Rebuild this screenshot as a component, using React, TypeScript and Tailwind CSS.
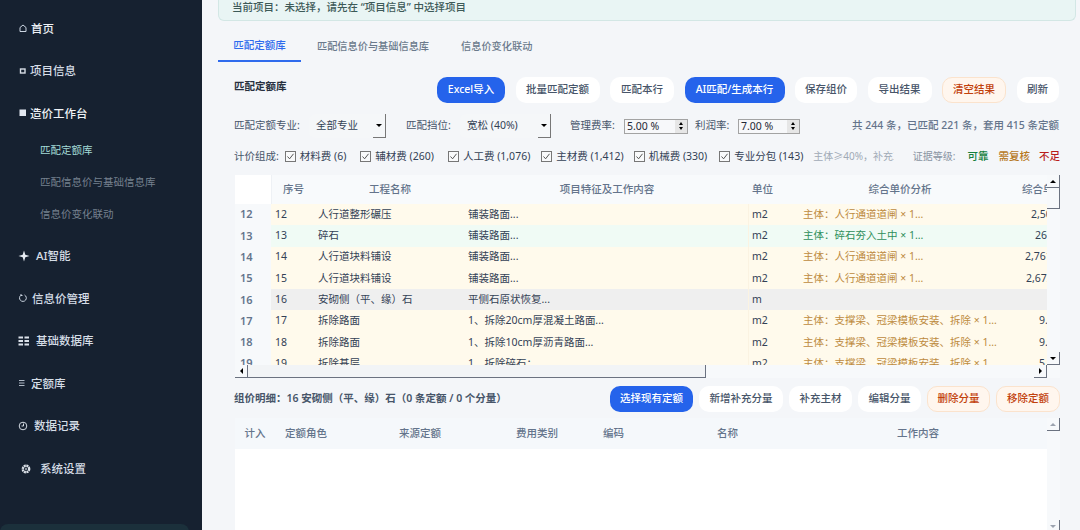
import React from 'react'

const font = { fontFamily: '"Noto Sans", "Noto Sans CJK SC", sans-serif' }

const Icon = ({ kind }: { kind: string }) => {
  if (kind === 'home')
    return (
      <svg width="10" height="10" viewBox="0 0 10 10" fill="none" stroke="#cbd5e1" strokeWidth="1">
        <path d="M2 4.5 5 2l3 2.5V8.5H2z" />
      </svg>
    )
  if (kind === 'box')
    return (
      <svg width="10" height="10" viewBox="0 0 10 10" fill="none" stroke="#d8dee6" strokeWidth="1.4">
        <rect x="2.5" y="3" width="4.5" height="4" />
      </svg>
    )
  if (kind === 'solid')
    return (
      <svg width="10" height="10" viewBox="0 0 10 10" fill="#e2e8f0">
        <rect x="1.5" y="1.5" width="6.5" height="6.5" />
      </svg>
    )
  if (kind === 'spark')
    return (
      <svg width="12" height="12" viewBox="0 0 12 12" fill="#e8edf3">
        <path d="M6 0.5 7.3 4.7 11.5 6 7.3 7.3 6 11.5 4.7 7.3 0.5 6 4.7 4.7z" />
      </svg>
    )
  if (kind === 'refresh')
    return (
      <svg width="10" height="10" viewBox="0 0 10 10" fill="none" stroke="#cbd5e1" strokeWidth="1">
        <path d="M3 2.2A3.4 3.4 0 1 0 6.5 2M3 1v1.5h1.5" />
      </svg>
    )
  if (kind === 'grid')
    return (
      <svg width="12" height="10" viewBox="0 0 12 10" fill="#dbe2ea">
        <rect x="0.5" y="0.5" width="4.5" height="2" />
        <rect x="6.5" y="0.5" width="4.5" height="2" />
        <rect x="0.5" y="4" width="4.5" height="2" />
        <rect x="6.5" y="4" width="4.5" height="2" />
        <rect x="0.5" y="7.5" width="4.5" height="2" />
        <rect x="6.5" y="7.5" width="4.5" height="2" />
      </svg>
    )
  if (kind === 'lines')
    return (
      <svg width="8" height="8" viewBox="0 0 8 8" stroke="#aeb8c4" strokeWidth="1">
        <path d="M1 1.5h5.5M1 4h5.5M1 6.5h5.5" />
      </svg>
    )
  if (kind === 'clock')
    return (
      <svg width="10" height="10" viewBox="0 0 10 10" fill="none" stroke="#d3dae2" strokeWidth="1">
        <circle cx="5" cy="5" r="3.8" />
        <path d="M5.5 2.5V5H3.5" />
      </svg>
    )
  return (
    <svg width="12" height="12" viewBox="0 0 12 12" fill="none" stroke="#dde3ea" strokeWidth="2.4">
      <circle cx="6" cy="6" r="3.2" strokeDasharray="2 0.5" />
      <circle cx="6" cy="6" r="0.5" strokeWidth="1" />
    </svg>
  )
}

const NavItem = ({ icon, label, gap, active }: { icon: string; label: string; gap: string; active?: boolean }) => (
  <div className={`flex h-[42.6px] items-center pl-[18px] text-[11.5px] font-medium ${gap} ${active ? 'text-[#eef2f6]' : 'text-[#d5dde6]'}`}>
    <Icon kind={icon} />
    <span>{label}</span>
  </div>
)

const Sidebar = () => (
  <aside className="relative flex h-full w-[202px] shrink-0 flex-col bg-[#162130] pt-[7px]">
    <NavItem icon="home" label="首页" gap="gap-[3px]" active />
    <NavItem icon="box" label="项目信息" gap="gap-[2px]" />
    <NavItem icon="solid" label="造价工作台" gap="gap-[2px]" active />
    <div className="flex flex-col pb-[3.5px] pl-[40px] text-[10.5px] text-[#75808e]">
      <div className="flex h-[32px] items-center text-[#a5dcd8]">匹配定额库</div>
      <div className="flex h-[32px] items-center">匹配信息价与基础信息库</div>
      <div className="flex h-[32px] items-center">信息价变化联动</div>
    </div>
    <NavItem icon="spark" label="AI智能" gap="gap-[6px]" />
    <NavItem icon="refresh" label="信息价管理" gap="gap-[4px]" />
    <NavItem icon="grid" label="基础数据库" gap="gap-[6px]" />
    <NavItem icon="lines" label="定额库" gap="gap-[5px]" />
    <NavItem icon="clock" label="数据记录" gap="gap-[6px]" />
    <div className="pl-[2px]">
      <NavItem icon="gear" label="系统设置" gap="gap-[8px]" />
    </div>
    <div className="absolute bottom-[-6px] left-0 h-[12px] w-[189px] rounded-t-lg bg-[#1b303b]" />
  </aside>
)

const Btn = ({ children, tone = 'plain', w }: { children: React.ReactNode; tone?: string; w: string }) => {
  const toneClass =
    tone === 'blue'
      ? 'bg-[#2563eb] text-white'
      : tone === 'danger'
        ? 'border border-[#fbe3cd] bg-[#fff6ee] text-[#c2410c]'
        : 'bg-white text-[#475569]'
  return (
    <button className={`flex h-[26px] items-center justify-center rounded-[10px] text-[10.5px] font-medium ${w} ${toneClass}`}>
      {children}
    </button>
  )
}

const Select = ({ label, w }: { label: string; w: string }) => (
  <div className={`flex h-[24px] items-center justify-between rounded-l-md bg-[#f5f7f9] pl-[7px] text-[10.5px] text-[#334155] ${w}`}>
    <span>{label}</span>
    <span className="flex h-[24px] w-[13px] items-center justify-center border-b border-r border-[#777]">
      <span className="h-0 w-0 border-x-[3px] border-t-[3px] border-x-transparent border-t-black" />
    </span>
  </div>
)

const Spin = ({ value, w }: { value: string; w: string }) => (
  <div className={`flex h-[15px] items-center justify-between border border-[#a3a3a3] bg-[#f7f8fa] pl-[2px] text-[10.5px] leading-none text-[#1f2937] ${w}`}>
    <span>{value}</span>
    <span className="flex h-full w-[12px] flex-col items-center justify-center gap-[2px] bg-[#e6e6e6]">
      <span className="h-0 w-0 border-x-[2.5px] border-b-[3px] border-x-transparent border-b-black" />
      <span className="h-0 w-0 border-x-[2.5px] border-t-[3px] border-x-transparent border-t-black" />
    </span>
  </div>
)

const Check = ({ label, className = '' }: { label: string; className?: string }) => (
  <label className={`flex items-center gap-[4px] text-[10.5px] text-[#334155] ${className}`}>
    <span className="flex h-[11px] w-[11px] items-center justify-center border border-[#777] bg-[#f9fafb]">
      <svg width="9" height="9" viewBox="0 0 9 9" fill="none" stroke="#444" strokeWidth="0.9">
        <path d="M1.5 4.5 3.6 6.8 7.5 1.8" />
      </svg>
    </span>
    {label}
  </label>
)

// 1px bevel corners of the old style scrollbars
const Arrow = ({ dir, light }: { dir: 'up' | 'down' | 'left' | 'right'; light?: boolean }) => {
  const c = light ? '#9ca3af' : '#000'
  const tri = {
    up: { borderLeft: '3px solid transparent', borderRight: '3px solid transparent', borderBottom: `3px solid ${c}` },
    down: { borderLeft: '3px solid transparent', borderRight: '3px solid transparent', borderTop: `3px solid ${c}` },
    left: { borderTop: '3px solid transparent', borderBottom: '3px solid transparent', borderRight: `3px solid ${c}` },
    right: { borderTop: '3px solid transparent', borderBottom: '3px solid transparent', borderLeft: `3px solid ${c}` },
  }[dir]
  return (
    <span className="flex h-[13px] w-[13px] shrink-0 items-center justify-center border-b border-r border-[#6b7280]">
      <span className="h-0 w-0" style={tri} />
    </span>
  )
}

type Row = { no: string; name: string; feat: string; unit: string; calc: string; total: string; pad: string; tone: 'y' | 'g' | 'n' }

const rows: Row[] = [
  { no: '12', name: '人行道整形碾压', feat: '铺装路面...', unit: 'm2', calc: '主体：人行通道道闸 × 1...', total: '2,506.58', pad: 'pl-[31px]', tone: 'y' },
  { no: '13', name: '碎石', feat: '铺装路面...', unit: 'm2', calc: '主体：碎石夯入土中 × 1...', total: '267.30', pad: 'pl-[35px]', tone: 'g' },
  { no: '14', name: '人行道块料铺设', feat: '铺装路面...', unit: 'm2', calc: '主体：人行通道道闸 × 1...', total: '2,761.40', pad: 'pl-[25px]', tone: 'y' },
  { no: '15', name: '人行道块料铺设', feat: '铺装路面...', unit: 'm2', calc: '主体：人行通道道闸 × 1...', total: '2,672.15', pad: 'pl-[26px]', tone: 'y' },
  { no: '16', name: '安砌侧（平、缘）石', feat: '平侧石原状恢复...', unit: 'm', calc: '', total: '', pad: '', tone: 'n' },
  { no: '17', name: '拆除路面', feat: '1、拆除20cm厚混凝土路面...', unit: 'm2', calc: '主体：支撑梁、冠梁模板安装、拆除 × 1...', total: '9.84', pad: 'pl-[39px]', tone: 'y' },
  { no: '18', name: '拆除路面', feat: '1、拆除10cm厚沥青路面...', unit: 'm2', calc: '主体：支撑梁、冠梁模板安装、拆除 × 1...', total: '9.84', pad: 'pl-[39px]', tone: 'y' },
  { no: '19', name: '拆除基层', feat: '1、拆除碎石；', unit: 'm2', calc: '主体：支撑梁、冠梁模板安装、拆除 × 1', total: '5.26', pad: 'pl-[39px]', tone: 'y' },
]

const cols = 'grid grid-cols-[36px_44px_150px_284px_51px_200px_47px]'

const MatchTable = () => (
  <div className="relative mt-[11px] h-[203px] w-[825px] bg-[#f7f9fb]">
    <div className="flex h-[190px]">
      <div className="w-[812px] overflow-hidden">
        <div className={`${cols} h-[29px] items-center bg-[#f8fafc] text-[10.5px] font-medium text-[#64748b]`}>
          <div className="h-full bg-white" />
          <div className="flex h-full items-center justify-center border-l border-[#eef1f5]">序号</div>
          <div className="text-center">工程名称</div>
          <div className="text-center">项目特征及工作内容</div>
          <div className="pl-[3px]">单位</div>
          <div className="text-center">综合单价分析</div>
          <div className="overflow-hidden whitespace-nowrap pl-[22px]">综合单价</div>
        </div>
        {rows.map((r) => {
          const bg = r.tone === 'y' ? 'bg-[#fffaec]' : r.tone === 'g' ? 'bg-[#f0fbf5]' : 'bg-[#efefef]'
          const calcColor = r.tone === 'g' ? 'text-[#2f8f5b]' : 'text-[#bd8a3e]'
          return (
            <div key={r.no} className={`${cols} h-[21.3px] items-center text-[10.5px] text-[#334155]`}>
              <div className="flex h-full items-center bg-[#f7f9fb] pl-[5px] text-[11px] font-semibold text-[#64748b]">{r.no}</div>
              <div className={`flex h-full items-center pl-[4px] ${bg}`}>{r.no}</div>
              <div className={`flex h-full items-center pl-[3px] ${bg}`}>{r.name}</div>
              <div className={`flex h-full items-center whitespace-nowrap border-r border-[#fbf3e2] pl-[3px] ${bg}`}>{r.feat}</div>
              <div className={`flex h-full items-center pl-[3px] ${bg}`}>{r.unit}</div>
              <div className={`flex h-full items-center whitespace-nowrap pl-[3px] ${calcColor} ${bg}`}>{r.calc}</div>
              <div className={`flex h-full items-center overflow-hidden whitespace-nowrap ${r.pad} ${bg}`}>{r.total}</div>
            </div>
          )
        })}
      </div>
      <div className="flex w-[13px] flex-col">
        <Arrow dir="up" />
        <span className="h-[21px] border-b border-r border-[#6b7280]" />
        <div className="flex-1" />
        <Arrow dir="down" />
      </div>
    </div>
    <div className="flex h-[13px] w-[812px] items-center bg-[#f7f9fb]">
      <Arrow dir="left" />
      <span className="h-[13px] w-[458px] border-b border-r border-[#6b7280] bg-[#f2f4f6]" />
      <div className="flex-1" />
      <Arrow dir="right" />
    </div>
  </div>
)

const DetailTable = () => (
  <div className="relative mt-[6px] flex h-[120px] w-[825px] overflow-hidden">
    <div className="w-[812px]">
      <div className="grid h-[31px] grid-cols-[40px_106px_111px_94px_64px_180px_217px] items-center bg-[#f5f8fb] text-[10.5px] font-medium text-[#64748b]">
        <div className="text-center">计入</div>
        <div className="pl-[10px]">定额角色</div>
        <div className="pl-[18px]">来源定额</div>
        <div className="pl-[24px]">费用类别</div>
        <div className="pl-[17px]">编码</div>
        <div className="pl-[67px]">名称</div>
        <div className="pl-[67px]">工作内容</div>
      </div>
      <div className="h-[89px] bg-white" />
    </div>
    <div className="flex w-[13px] flex-col justify-between bg-[#f7f9fb] pb-[5px]">
      <Arrow dir="up" light />
      <Arrow dir="down" light />
    </div>
  </div>
)

export default function App() {
  return (
    <div className="flex h-[530px] w-[1080px] overflow-hidden bg-[#f4f6f9]" style={font}>
      <Sidebar />
      <main className="flex min-w-0 flex-1 flex-col overflow-hidden">
        <div className="ml-[16px] mr-[4px] flex h-[21px] shrink-0 items-center whitespace-pre rounded-b-md border border-t-0 border-[#d3e7e5] bg-[#e9f5f4] pb-[4px] pl-[13px] text-[10.5px] font-medium text-[#3d5a58]">
          当前项目：未选择，请先在 “项目信息” 中选择项目
        </div>
        <div className="ml-[16px] mt-[15px] flex h-[26px] shrink-0 items-start text-[10.2px] font-medium text-[#6b7a8c]">
          <div className="flex h-[26px] w-[83px] justify-center border-b-2 border-[#2f6bed] pt-[2px] text-[10.5px] text-[#2f6bed]">匹配定额库</div>
          <div className="ml-[16px] pt-[3px]">匹配信息价与基础信息库</div>
          <div className="ml-[32px] pt-[3px]">信息价变化联动</div>
        </div>
        <div className="shrink-0 pl-[33px]">
          <div className="mt-[15px] flex items-center">
            <div className="-ml-[1px] w-[203px] pb-[6px] text-[10.5px] font-semibold text-[#27303f]">匹配定额库</div>
            <div className="flex gap-[10.5px]">
              <Btn tone="blue" w="w-[68px]">Excel导入</Btn>
              <Btn w="w-[84px]">批量匹配定额</Btn>
              <Btn w="w-[64px]">匹配本行</Btn>
              <Btn tone="blue" w="w-[100px]">AI匹配/生成本行</Btn>
              <Btn w="w-[62px]">保存组价</Btn>
              <Btn w="w-[64px]">导出结果</Btn>
              <Btn tone="danger" w="w-[64px]">清空结果</Btn>
              <Btn w="w-[42px]">刷新</Btn>
            </div>
          </div>
          <div className="-ml-[1px] mt-[11px] flex h-[24px] w-[826px] items-center text-[10.5px] text-[#475569]">
            <span className="w-[75px]">匹配定额专业:</span>
            <Select label="全部专业" w="w-[77px]" />
            <span className="ml-[20px] w-[54px]">匹配挡位:</span>
            <Select label="宽松 (40%)" w="w-[91px]" />
            <span className="ml-[19px] w-[54px]">管理费率:</span>
            <Spin value="5.00 %" w="w-[64px]" />
            <span className="ml-[7px] w-[43px]">利润率:</span>
            <Spin value="7.00 %" w="w-[62px]" />
            <span className="ml-auto mr-[1px] font-medium text-[#64748b]">共 244 条，已匹配 221 条，套用 415 条定额</span>
          </div>
          <div className="-ml-[1px] mt-[11px] flex h-[15px] w-[826px] items-center whitespace-nowrap text-[10.5px] text-[#475569]">
            <span className="w-[53px]">计价组成:</span>
            <div className="flex gap-[14px]">
              <Check label="材料费 (6)" />
              <Check label="辅材费 (260)" />
              <Check label="人工费 (1,076)" />
              <Check label="主材费 (1,412)" className="-ml-[3px]" />
              <Check label="机械费 (330)" className="-ml-[4px]" />
              <Check label="专业分包 (143)" className="-ml-[2px]" />
            </div>
            <span className="ml-[10px] w-[84px] overflow-hidden text-[10px] text-[#a0aab6]">主体≥40%，补充工</span>
            <span className="ml-[19px] text-[10px] text-[#8a95a3]">证据等级:</span>
            <span className="ml-[12px] font-medium text-[#15803d]">可靠</span>
            <span className="ml-[10px] font-medium text-[#b7791f]">需复核</span>
            <span className="ml-[9px] font-medium text-[#b91c1c]">不足</span>
          </div>
          <MatchTable />
          <div className="mt-[8px] flex h-[26px] w-[825px] items-center justify-between">
            <span className="-ml-[1px] text-[10.5px] font-semibold text-[#475569]">组价明细：16 安砌侧（平、缘）石（0 条定额 / 0 个分量）</span>
            <div className="flex gap-[6px]">
              <Btn tone="blue" w="w-[83px]">选择现有定额</Btn>
              <Btn w="w-[84px]">新增补充分量</Btn>
              <Btn w="w-[63px]">补充主材</Btn>
              <Btn w="w-[63px]">编辑分量</Btn>
              <Btn tone="danger" w="w-[63px]">删除分量</Btn>
              <Btn tone="danger" w="w-[64px]">移除定额</Btn>
            </div>
          </div>
          <DetailTable />
        </div>
      </main>
    </div>
  )
}
